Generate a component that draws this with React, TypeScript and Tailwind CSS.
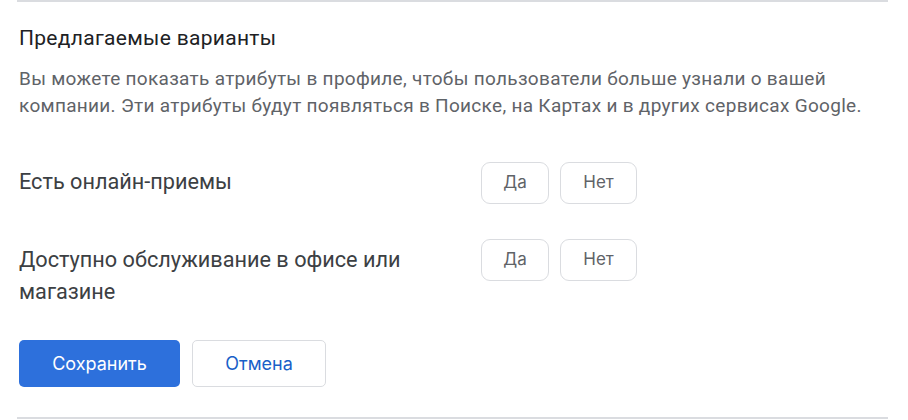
import React from 'react';

const rows = [
  { label: 'Есть онлайн-приемы', pt: 'pt-[4px]' },
  { label: 'Доступно обслуживание в офисе или магазине', pt: 'pt-[5px]' },
];

const ChoiceButton: React.FC<{ text: string; w: string }> = ({ text, w }) => (
  <button
    className={`${w} h-[42px] rounded-[9px] border border-[#dadce0] bg-white text-[17px] text-[#5f6368] flex items-center justify-center`}
    style={{ fontFamily: 'Inter, "Open Sans", sans-serif' }}
  >
    {text}
  </button>
);

const App: React.FC = () => {
  return (
    <div className="w-[908px] h-[420px] bg-white overflow-hidden" style={{ fontFamily: 'Roboto, "Noto Sans", sans-serif' }}>
      <div className="mx-[17px] w-[871px] h-[419px] border-t-2 border-b-2 border-[#dadce0] flex flex-col px-[2px]">
        {/* Header */}
        <h2 className="mt-[22px] text-[21px] leading-[28px] tracking-[0.3px] text-[#202124]">Предлагаемые варианты</h2>
        <p className="mt-[13px] text-[19px] leading-[27px] tracking-[0.3px] text-[#5f6368] whitespace-nowrap">
          Вы можете показать атрибуты в профиле, чтобы пользователи больше узнали о вашей
          <br />
          компании. Эти атрибуты будут появляться в Поиске, на Картах и в других сервисах Google.
        </p>

        {/* Attribute rows */}
        <div className="mt-[43px] flex flex-col gap-[35px]">
          {rows.map((r, i) => (
            <div key={i} className="flex items-start">
              <div className={`w-[462px] ${r.pt} text-[21.7px] leading-[32px] text-[#3c4043] pr-[30px]`}>{r.label}</div>
              <div className="flex gap-[11px]">
                <ChoiceButton text="Да" w="w-[68px]" />
                <ChoiceButton text="Нет" w="w-[77px]" />
              </div>
            </div>
          ))}
        </div>

        {/* Actions */}
        <div className="mt-[32px] flex gap-[12px]">
          <button
            className="w-[161px] h-[47px] rounded-[5px] bg-[#2d70dc] text-white text-[18px]"
            style={{ fontFamily: 'Inter, "Open Sans", sans-serif' }}
          >
            Сохранить
          </button>
          <button
            className="w-[134px] h-[47px] rounded-[5px] border border-[#dadce0] bg-white text-[#1a5fc8] text-[18px]"
            style={{ fontFamily: 'Inter, "Open Sans", sans-serif' }}
          >
            Отмена
          </button>
        </div>
      </div>
    </div>
  );
};

export default App;
